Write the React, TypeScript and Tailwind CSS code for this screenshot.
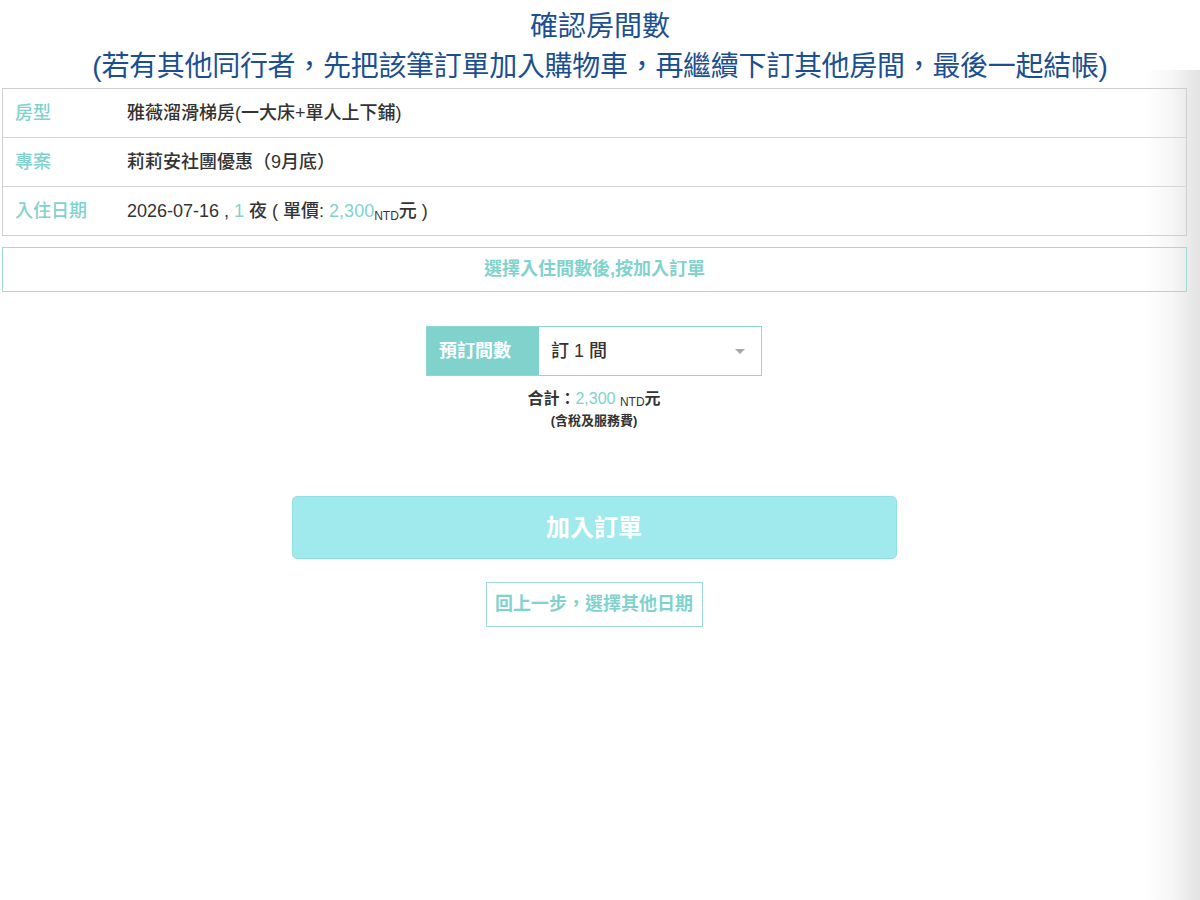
import React from "react";

const CJK = '"Liberation Sans", "Noto Sans CJK TC", sans-serif';

export default function App() {
  return (
    <div
      className="relative w-[1200px] h-[900px] bg-white overflow-hidden"
      style={{ fontFamily: CJK }}
    >
      <div className="absolute right-0 top-[70px] bottom-0 w-[55px] bg-gradient-to-r from-transparent via-[#f6f6f6] to-[#e2e2e2]" />

      <div className="relative">
        <div className="pt-[7px] text-center text-[#1c4f92] text-[28px] leading-[40px]">
          <div>確認房間數</div>
          <div className="tracking-[-0.3px]">(若有其他同行者，先把該筆訂單加入購物車，再繼續下訂其他房間，最後一起結帳)</div>
        </div>

        <div className="ml-[2px] w-[1185px] border border-[#cfcfcf] mt-px">
          {[
            { k: "房型", v: <span>雅薇溜滑梯房(一大床+單人上下鋪)</span> },
            { k: "專案", v: <span>莉莉安社團優惠（9月底）</span> },
            {
              k: "入住日期",
              v: (
                <span>
                  2026-07-16 , <span className="text-[#7fd3cc] font-normal">1</span> 夜 ( 單價:{" "}
                  <span className="text-[#7fd3cc] font-normal">2,300</span>
                  <span className="text-[12px] relative top-[3px]">NTD</span>元 )
                </span>
              ),
            },
          ].map((r, i) => (
            <div
              key={i}
              className={`flex items-center ${i > 0 ? "h-[49px] border-t border-[#d6d6d6]" : "h-[48px]"}`}
            >
              <div className="w-[124px] pl-[12px] text-[18px] text-[#7fd3cc] font-medium">{r.k}</div>
              <div className="text-[18px] text-[#333] font-medium">{r.v}</div>
            </div>
          ))}
        </div>

        <div className="ml-[2px] w-[1185px] mt-[11px] h-[45px] border border-[#9edcd7] flex items-center justify-center text-[18px] font-bold text-[#7fd3cc]">
          選擇入住間數後,按加入訂單
        </div>

        <div className="mt-[34px] flex justify-center">
          <div className="flex w-[336px] h-[50px] border border-[#8fd7d0] ml-[-12px]">
            <div className="w-[112px] bg-[#7fd3cc] text-white font-bold text-[18px] flex items-center pl-[12px]">
              預訂間數
            </div>
            <div className="flex-1 flex items-center justify-between pl-[12px] pr-[16px] text-[18px] text-[#333] font-medium">
              <span>訂 1 間</span>
              <span className="w-0 h-0 border-l-[5px] border-r-[5px] border-t-[5px] border-l-transparent border-r-transparent border-t-[#a8a8a8]" />
            </div>
          </div>
        </div>

        <div className="mt-[13px] text-center text-[#333] mr-[12px]">
          <div className="text-[16px] leading-[20px] font-bold">
            合計：<span className="text-[#7fd3cc] font-normal">2,300</span>{" "}
            <span className="text-[12px] font-normal relative top-[2px]">NTD</span>元
          </div>
          <div className="text-[13px] leading-[16px] font-bold mt-[3px]">(含稅及服務費)</div>
        </div>

        <div className="mt-[67px] flex justify-center">
          <div className="w-[605px] h-[63px] rounded-[5px] bg-[#a0e9ed] border border-[#93e0e4] flex items-center justify-center text-white font-bold text-[24px] mr-[12px]">
            加入訂單
          </div>
        </div>

        <div className="mt-[23px] flex justify-center">
          <div className="w-[217px] h-[45px] bg-white border border-[#9edcd7] flex items-center justify-center text-[#7fd3cc] font-bold text-[18px] mr-[12px]">
            回上一步，選擇其他日期
          </div>
        </div>
      </div>
    </div>
  );
}
